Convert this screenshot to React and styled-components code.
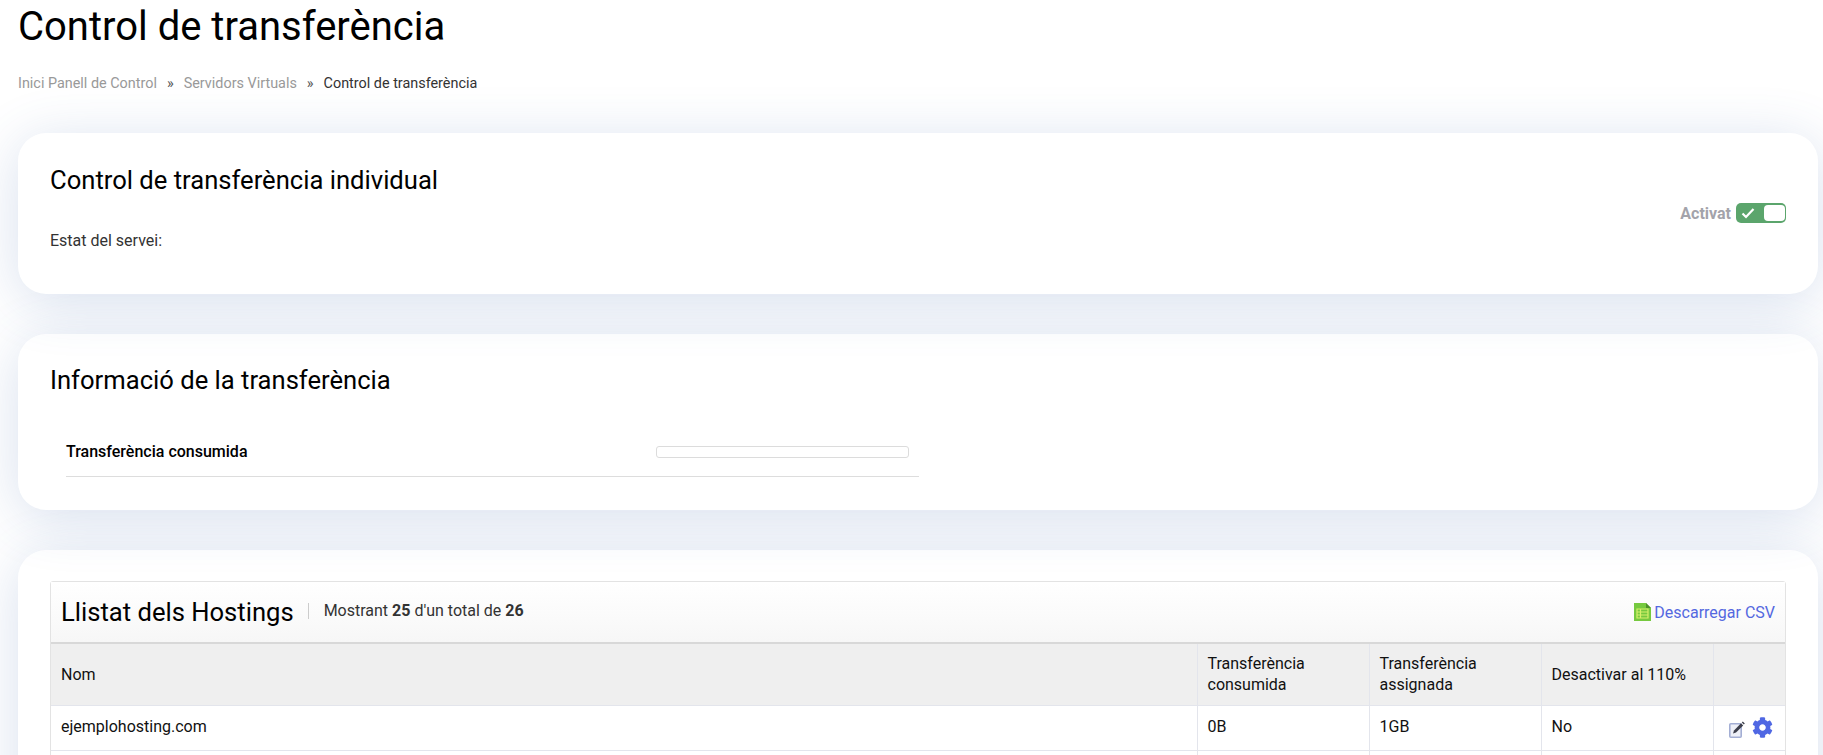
import styled, { createGlobalStyle } from "styled-components";
import { FaCog } from "react-icons/fa";

const Global = createGlobalStyle`
  html, body {
    margin: 0;
    padding: 0;
    height: 755px;
    overflow: hidden;
    background: #fff;
    font-family: Roboto, "Liberation Sans", sans-serif;
    color: #000;
  }
  * { box-sizing: border-box; }
`;

const Page = styled.div`
  height: 755px;
  overflow: hidden;
  padding: 0 5px 0 18px;
`;

const PageTitle = styled.h1`
  margin: 0;
  padding-top: 4px;
  height: 64px;
  font-size: 40px;
  line-height: 46px;
  font-weight: 400;
`;

const Breadcrumb = styled.div`
  display: flex;
  align-items: center;
  height: 38px;
  font-size: 14.4px;
  color: #333;
  margin-bottom: 31px;
`;

const Crumb = styled.span`
  color: #999;
`;

const Sep = styled.span`
  margin: 0 10px;
  color: #555;
`;

const Card = styled.section`
  position: relative;
  z-index: ${(p) => p.$z};
  height: ${(p) => p.$h}px;
  margin-bottom: 40px;
  padding: ${(p) => p.$pad}px 32px 0;
  border-radius: 28px;
  background: #fff;
  box-shadow: 0 8px 56px rgba(60, 100, 170, 0.2);
`;

const CardTitle = styled.h2`
  margin: 0;
  font-size: 25.6px;
  line-height: 32px;
  font-weight: 400;
`;

const StatusRow = styled.div`
  display: flex;
  justify-content: space-between;
  align-items: flex-start;
  color: #333;
  font-size: 16px;
`;

const StatusLabel = styled.span`
  margin-top: 35px;
  line-height: 20px;
`;

const ToggleWrap = styled.div`
  display: flex;
  align-items: center;
  gap: 5px;
  margin-top: 7px;
  font-size: 16px;
  font-weight: 700;
  color: #a3a3aa;
`;

const Toggle = styled.div`
  display: flex;
  align-items: center;
  justify-content: space-between;
  width: 50px;
  height: 20px;
  padding: 0 1px 0 5px;
  border-radius: 5px;
  background: #5ba56c;
`;

const Knob = styled.span`
  width: 21px;
  height: 16px;
  border-radius: 4px;
  background: #fff;
`;

const InfoRow = styled.div`
  display: flex;
  align-items: center;
  width: 853px;
  height: 56px;
  margin: 25px 0 0 16px;
  padding-top: 6px;
  border-bottom: 1px solid #ddd;
`;

const InfoLabel = styled.strong`
  width: 590px;
  font-size: 16px;
  font-weight: 500;
`;

const Progress = styled.div`
  width: 253px;
  height: 12px;
  border: 1px solid #dcdcdc;
  border-radius: 3px;
  background: #fff;
`;

const ListBox = styled.div`
  width: 1736px;
  border: 1px solid #e3e3e3;
  border-radius: 3px 3px 0 0;
  background: #fff;
`;

const ListHead = styled.div`
  display: flex;
  align-items: center;
  height: 62px;
  padding: 0 10px;
  border-bottom: 2px solid #d8d8d8;
  background: linear-gradient(#fff, #f7f7f7);
`;

const ListTitle = styled.h3`
  margin: 0;
  font-size: 25.6px;
  font-weight: 400;
`;

const ListCount = styled.div`
  margin-left: 14px;
  margin-top: -3px;
  padding-left: 15px;
  border-left: 1px solid #ccc;
  font-size: 16px;
  line-height: 16px;
  color: #333;
  b { font-weight: 700; }
`;

const CsvLink = styled.a`
  display: flex;
  align-items: center;
  gap: 3px;
  margin-left: auto;
  font-size: 16px;
  color: #5468e0;
`;

const Table = styled.table`
  width: 100%;
  border-collapse: collapse;
  table-layout: fixed;
  font-size: 16px;
`;

const Th = styled.th`
  width: ${(p) => (p.$w ? `${p.$w}px` : "auto")};
  height: 61px;
  padding: 0 10px 0 10px;
  border: 1px solid #e3e5ec;
  border-top: 0;
  background: #efefef;
  color: #111;
  font-weight: 400;
  line-height: 21.5px;
  text-align: left;
  &:first-child { border-left: 0; }
  &:last-child { border-right: 0; }
`;

const Td = styled.td`
  height: 45px;
  padding: 0 10px 3px;
  border: 1px solid #e3e5ec;
  color: #111;
  &:first-child { border-left: 0; }
  &:last-child { border-right: 0; }
`;

const Actions = styled.div`
  display: flex;
  align-items: flex-end;
  gap: 7px;
  margin: 0 0 -3px 5px;
  color: #4f67e3;
`;

const SheetIcon = () => (
  <svg width="17" height="18" viewBox="0 0 17 18">
    <path d="M0 0h12l5 5v13H0z" fill="#76c93f" />
    <path d="M12 0l5 5h-5z" fill="#4d8f2a" />
    <path d="M3 6h11v9H3z" fill="none" stroke="#d6f06a" strokeWidth="1.2" />
    <path d="M3 9h11M3 12h11M6.5 6v9" stroke="#d6f06a" strokeWidth="1.2" />
  </svg>
);

const EditIcon = () => (
  <svg width="16" height="17" viewBox="0 0 16 17">
    <rect x="0.8" y="2.8" width="11.4" height="13.4" rx="1" fill="#eef0f8" stroke="#a3aed4" strokeWidth="1.6" />
    <path d="M4 12.5l1-3L12 2.2l2.2 2.2-7.2 7.1z" fill="#3d3f4c" />
    <path d="M12.8 1.4l1-1 2 2-1 1z" fill="#3d3f4c" />
  </svg>
);

const CheckIcon = () => (
  <svg width="14" height="12" viewBox="0 0 14 12">
    <path d="M1.5 6.5l3.5 3.5 7.5-8" fill="none" stroke="#fff" strokeWidth="2.2" />
  </svg>
);

const App = () => {
  return (
    <Page>
      <Global />
      <PageTitle>Control de transferència</PageTitle>
      <Breadcrumb>
        <Crumb>Inici Panell de Control</Crumb>
        <Sep>»</Sep>
        <Crumb>Servidors Virtuals</Crumb>
        <Sep>»</Sep>
        <span>Control de transferència</span>
      </Breadcrumb>

      <Card $h={161} $pad={31} $z={3}>
        <CardTitle>Control de transferència individual</CardTitle>
        <StatusRow>
          <StatusLabel>Estat del servei:</StatusLabel>
          <ToggleWrap>
            Activat
            <Toggle>
              <CheckIcon />
              <Knob />
            </Toggle>
          </ToggleWrap>
        </StatusRow>
      </Card>

      <Card $h={176} $pad={30} $z={2}>
        <CardTitle>Informació de la transferència</CardTitle>
        <InfoRow>
          <InfoLabel>Transferència consumida</InfoLabel>
          <Progress />
        </InfoRow>
      </Card>

      <Card $h={400} $pad={31} $z={1}>
        <ListBox>
          <ListHead>
            <ListTitle>Llistat dels Hostings</ListTitle>
            <ListCount>
              Mostrant <b>25</b> d'un total de <b>26</b>
            </ListCount>
            <CsvLink>
              <SheetIcon />
              Descarregar CSV
            </CsvLink>
          </ListHead>
          <Table>
            <thead>
              <tr>
                <Th>Nom</Th>
                <Th $w={172}>Transferència consumida</Th>
                <Th $w={172}>Transferència assignada</Th>
                <Th $w={172}>Desactivar al 110%</Th>
                <Th $w={72} />
              </tr>
            </thead>
            <tbody>
              <tr>
                <Td>ejemplohosting.com</Td>
                <Td>0B</Td>
                <Td>1GB</Td>
                <Td>No</Td>
                <Td>
                  <Actions>
                    <EditIcon />
                    <FaCog size={21} />
                  </Actions>
                </Td>
              </tr>
              <tr>
                <Td />
                <Td />
                <Td />
                <Td />
                <Td />
              </tr>
            </tbody>
          </Table>
        </ListBox>
      </Card>
    </Page>
  );
};

export default App;
